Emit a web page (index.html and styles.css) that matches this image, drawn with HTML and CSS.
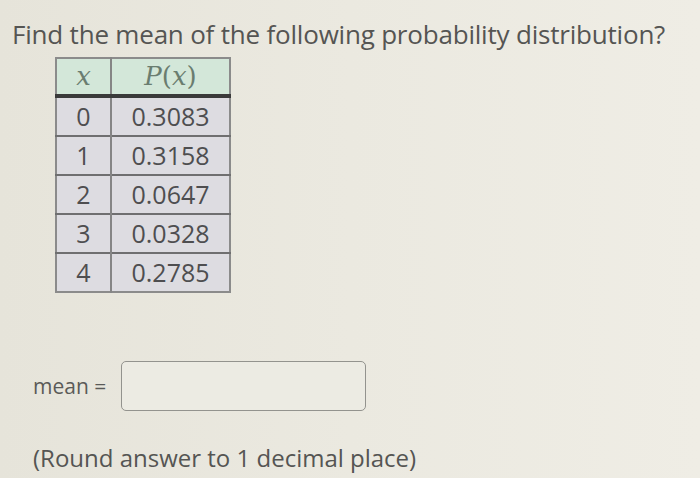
FILE: index.html
```html
<!DOCTYPE html>
<html>
<head>
<meta charset="utf-8">
<link rel="stylesheet" href="styles.css">
</head>
<body>
<div class="page">
  <h1 class="question">Find the mean of the following probability distribution?</h1>
  <table class="dist">
    <thead>
      <tr><th class="cx"><i>x</i></th><th class="cp"><i>P</i>(<i>x</i>)</th></tr>
    </thead>
    <tbody>
      <tr><td class="cx">0</td><td class="cp">0.3083</td></tr>
      <tr><td class="cx">1</td><td class="cp">0.3158</td></tr>
      <tr><td class="cx">2</td><td class="cp">0.0647</td></tr>
      <tr><td class="cx">3</td><td class="cp">0.0328</td></tr>
      <tr><td class="cx">4</td><td class="cp">0.2785</td></tr>
    </tbody>
  </table>
  <div class="answer">
    <span class="label">mean =</span>
    <div class="field"></div>
  </div>
  <p class="note">(Round answer to 1 decimal place)</p>
</div>
</body>
</html>
```
FILE: styles.css
```css
html, body {
  margin: 0;
  padding: 0;
}
body {
  width: 700px;
  height: 478px;
  overflow: hidden;
  background: linear-gradient(90deg, #e6e4da 0%, #ebe9e0 50%, #efede5 100%);
  font-family: "Open Sans", "DejaVu Sans", sans-serif;
  color: #565654;
}
.page {
  padding: 14px 0 0 12px;
}
.question {
  margin: 0;
  font-size: 26px;
  font-weight: 400;
  line-height: 40px;
  color: #555553;
  letter-spacing: -0.2px;
}
.dist {
  margin: 3px 0 0 43px;
  border-collapse: collapse;
  font-size: 25px;
  border: 2px solid #8b8b8b;
}
.dist th,
.dist td {
  padding: 0;
}
.dist th {
  background: #d3e7d9;
  font-family: "DejaVu Serif", "Liberation Serif", serif;
  font-weight: 400;
  color: #6a7d70;
  height: 35px;
  font-size: 26px;
  line-height: 35px;
  border-bottom: 4px solid #3a3a3a;
}
.dist th i {
  font-style: italic;
}
.dist td {
  background: #dddce1;
  height: 37px;
  line-height: 37px;
  border-top: 2px solid #6f6f70;
  color: #4e4e50;
  text-align: center;
}
.dist tbody tr:first-child td {
  border-top: none;
}
.cx {
  width: 53px;
  border-right: 2px solid #858585;
}
.cp {
  width: 117px;
}
.answer {
  display: flex;
  align-items: center;
  margin: 68px 0 0 21px;
}
.label {
  font-size: 21px;
  color: #5a5a58;
  margin-right: 15px;
}
.field {
  width: 243px;
  height: 48px;
  border: 1.5px solid #93938e;
  border-radius: 5px;
  background: #ecebe3;
}
.note {
  margin: 32px 0 0 21px;
  font-size: 24px;
  line-height: 30px;
  color: #555553;
}
```
